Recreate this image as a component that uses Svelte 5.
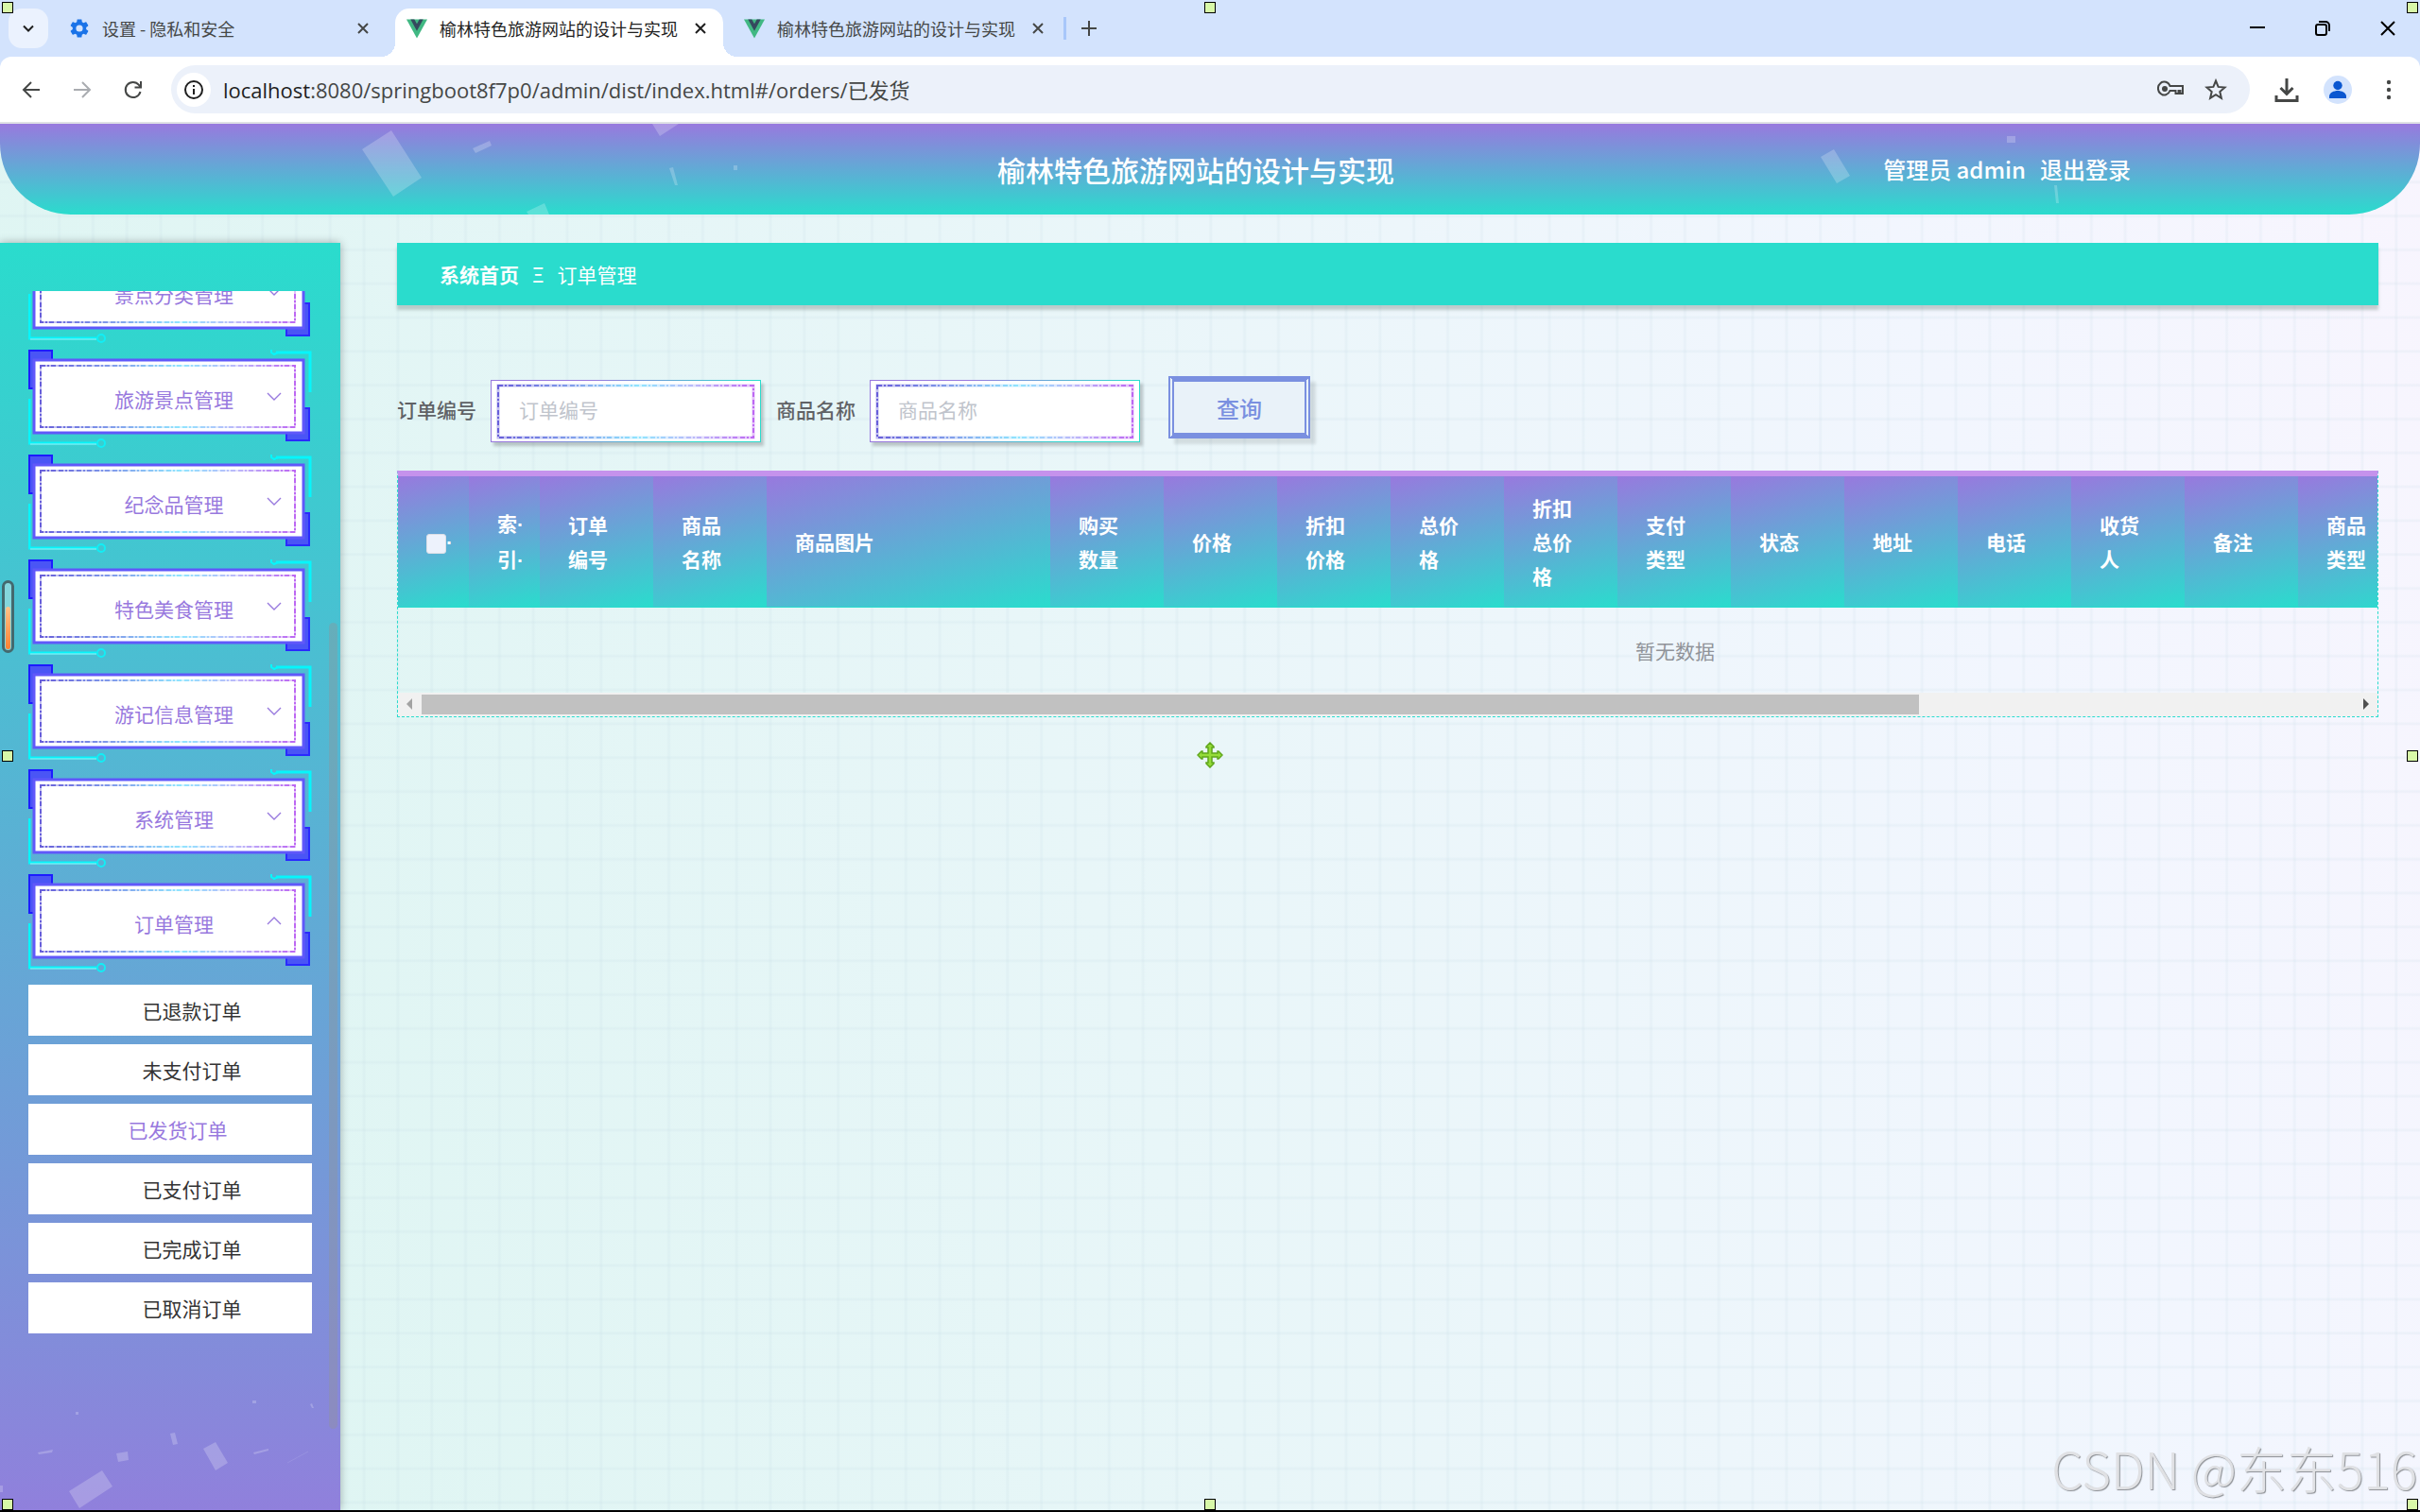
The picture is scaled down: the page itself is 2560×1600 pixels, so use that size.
<script lang="ts">
  interface Column {
    label: string
    width: number
    clipped?: boolean
  }

  const tabs = [
    { title: '设置 - 隐私和安全', icon: 'gear' },
    { title: '榆林特色旅游网站的设计与实现', icon: 'vue' },
    { title: '榆林特色旅游网站的设计与实现', icon: 'vue' },
  ]
  let activeTab = $state(1)

  const menus = ['景点分类管理', '旅游景点管理', '纪念品管理', '特色美食管理', '游记信息管理', '系统管理', '订单管理']
  let openMenu = $state('订单管理')

  const orderLinks = ['已退款订单', '未支付订单', '已发货订单', '已支付订单', '已完成订单', '已取消订单']
  let activeLink = $state('已发货订单')

  const columns: Column[] = [
    { label: '索引', width: 75, clipped: true },
    { label: '订单编号', width: 120 },
    { label: '商品名称', width: 120 },
    { label: '商品图片', width: 300 },
    { label: '购买数量', width: 120 },
    { label: '价格', width: 120 },
    { label: '折扣价格', width: 120 },
    { label: '总价格', width: 120 },
    { label: '折扣总价格', width: 120 },
    { label: '支付类型', width: 120 },
    { label: '状态', width: 120 },
    { label: '地址', width: 120 },
    { label: '电话', width: 120 },
    { label: '收货人', width: 120 },
    { label: '备注', width: 120 },
    { label: '商品类型', width: 120 },
  ]

  const handles = ['tl', 'tc', 'tr', 'ml', 'mr', 'bl', 'bc', 'br']

  let orderNo = $state('')
  let goodsName = $state('')
  let checkAll = $state(false)
</script>

{#snippet closeIcon()}
  <svg width="12" height="12" viewBox="0 0 12 12"><path d="M1 1l10 10M11 1L1 11" stroke="currentColor" stroke-width="2" fill="none" /></svg>
{/snippet}

{#snippet field(id: string, label: string)}
  <label for={id}>{label}</label>
  <div class="field">
    {#if id === 'order-no'}
      <input {id} type="text" placeholder={label} bind:value={orderNo} />
    {:else}
      <input {id} type="text" placeholder={label} bind:value={goodsName} />
    {/if}
    <svg class="field-frame" viewBox="0 0 286 66">
      <rect x="8" y="6" width="270" height="55" fill="none" stroke="url(#dash-gradient)" stroke-opacity="0.35" stroke-width="3" />
      <rect x="8" y="6" width="270" height="55" fill="none" stroke="url(#dash-gradient)" stroke-opacity="0.75" stroke-width="2" stroke-dasharray="5 2 2 2 5 3" />
    </svg>
  </div>
{/snippet}

<svg class="sprite" width="0" height="0" aria-hidden="true">
  <defs>
    <linearGradient id="dash-gradient">
      <stop offset="0" stop-color="#4a3fd2" />
      <stop offset="0.3" stop-color="#6a8ee8" />
      <stop offset="0.55" stop-color="#7be0ff" />
      <stop offset="0.78" stop-color="#b0a8f8" />
      <stop offset="1" stop-color="#b04af0" />
    </linearGradient>
  </defs>
  <symbol id="menu-frame" viewBox="0 0 300 104">
    <path d="M1 1h24v12H6v28H1z" fill="#4a55f5" stroke="#1c1cff" stroke-width="2" />
    <path d="M297 62v34h-24V84h18V62z" fill="#4a55f5" stroke="#2a2aff" stroke-width="2" />
    <rect x="6" y="11" width="285" height="77" fill="#fff" stroke="#6058fa" stroke-width="3" />
    <rect x="13" y="17" width="269" height="65" fill="none" stroke="url(#dash-gradient)" stroke-opacity="0.35" stroke-width="2" />
    <rect x="13" y="17" width="269" height="65" fill="none" stroke="url(#dash-gradient)" stroke-opacity="0.75" stroke-width="2" stroke-dasharray="5 2 2 2 5 3" />
    <path d="M262 3h36v42" fill="none" stroke="#06f6fb" stroke-width="3" />
    <path d="M257 0v3l3 2 4-2" fill="none" stroke="#06f6fb" stroke-width="2" />
    <path d="M1 52v47h71" fill="none" stroke="#06f6fb" stroke-width="3" />
    <path d="M2 100h70" fill="none" stroke="#a8e8ee" />
    <circle cx="77" cy="99" r="4" fill="none" stroke="#12eef5" stroke-width="2" />
  </symbol>
  <symbol id="vue" viewBox="0 0 23 21">
    <path d="M0 0h23L11.500 21z" fill="#41b883" />
    <path d="M4.500 0h4.200l2.800 5 2.800-5h4.200l-7 12.800z" fill="#35495e" />
  </symbol>
</svg>

<div class="window">
  <div class="tab-strip">
    <button class="tab-search" aria-label="搜索标签页">
      <svg width="14" height="14" viewBox="0 0 14 14"><path d="M2 4.500l5 5 5-5" fill="none" stroke="#1f1f1f" stroke-width="2" /></svg>
    </button>
    <div class="tabs">
      {#each tabs as tab, i}
        <div class="tab" class:active={activeTab === i}>
          <button class="tab-title" onclick={() => activeTab = i}>
            {#if tab.icon === 'gear'}
              <svg width="22" height="22" viewBox="1 1 22 22"><path fill="#1a73e8" d="M19.140 12.940c.04-.3.060-.61.060-.94 0-.32-.02-.64-.07-.94l2.030-1.580c.18-.14.23-.41.120-.61l-1.920-3.320c-.12-.22-.37-.29-.59-.22l-2.390.96c-.5-.38-1.030-.7-1.620-.94l-.36-2.540c-.04-.24-.24-.41-.48-.41h-3.840c-.24 0-.43.170-.47.410l-.36 2.540c-.59.240-1.130.570-1.620.940l-2.390-.96c-.22-.08-.47 0-.59.220L2.740 8.870c-.12.210-.08.470.120.610l2.030 1.580c-.05.3-.09.630-.09.940s.020.640.070.940l-2.030 1.580c-.18.140-.23.410-.12.610l1.920 3.320c.12.220.37.290.59.220l2.390-.96c.5.380 1.030.7 1.620.940l.36 2.540c.05.240.240.410.480.410h3.840c.24 0 .44-.17.470-.41l.36-2.540c.59-.24 1.130-.56 1.620-.94l2.390.96c.22.080.470 0 .59-.22l1.920-3.320c.12-.22.070-.47-.12-.61l-2.010-1.580zM12 15.600A3.600 3.600 0 1 1 12 8.400a3.600 3.600 0 0 1 0 7.200z" /></svg>
            {:else}
              <svg width="22" height="21"><use href="#vue" /></svg>
            {/if}
            <span>{tab.title}</span>
          </button>
          <button class="tab-close" aria-label="关闭">{@render closeIcon()}</button>
        </div>
      {/each}
    </div>
    <span class="separator"></span>
    <button class="new-tab" aria-label="打开新的标签页">
      <svg width="16" height="16" viewBox="0 0 16 16"><path d="M8 0v16M0 8h16" stroke="#454746" stroke-width="2" /></svg>
    </button>
    <div class="window-controls">
      <button aria-label="最小化"><svg width="16" height="16" viewBox="0 0 16 16"><path d="M0 7h16" stroke="#000" stroke-width="2" /></svg></button>
      <button aria-label="还原"><svg width="16" height="16" viewBox="0 0 16 16" fill="none" stroke="#000" stroke-width="2"><rect x="1" y="4" width="11" height="11" rx="2" /><path d="M4 1h7a4 4 0 0 1 4 4v6" /></svg></button>
      <button aria-label="关闭窗口"><svg width="16" height="16" viewBox="0 0 16 16"><path d="M1 1l14 14M15 1L1 15" stroke="#000" stroke-width="2" /></svg></button>
    </div>
  </div>

  <div class="toolbar">
    <button class="nav-btn" aria-label="后退"><svg width="20" height="20" viewBox="0 0 20 20" fill="none" stroke="#454746" stroke-width="2"><path d="M19 10H3M10 2l-8 8 8 8" /></svg></button>
    <button class="nav-btn" aria-label="前进"><svg width="20" height="20" viewBox="0 0 20 20" fill="none" stroke="#a9acb0" stroke-width="2"><path d="M1 10h16M10 2l8 8-8 8" /></svg></button>
    <button class="nav-btn" aria-label="重新加载"><svg width="20" height="20" viewBox="0 0 20 20" fill="none" stroke="#454746" stroke-width="2"><path d="M17.500 12A8 8 0 1 1 16 5l2 2M18 1v6.500h-6.500" /></svg></button>
    <div class="address">
      <span class="site-info">
        <svg width="20" height="20" viewBox="0 0 20 20" fill="none" stroke="#1f1f1f" stroke-width="2"><circle cx="10" cy="10" r="9" /><path d="M10 9v6M10 5v2" /></svg>
      </span>
      <span class="url"><b>localhost</b>:8080/springboot8f7p0/admin/dist/index.html#/orders/已发货</span>
      <button aria-label="管理密码"><svg width="28" height="22" viewBox="0 0 28 22" fill="none" stroke="#454746" stroke-width="2"><path d="M13.500 7H27v8h-2.500v-3h-2v3h-3v-3h-6a6.500 7 0 1 1 0-5z" /><circle cx="8" cy="10" r="3" fill="#454746" stroke="none" /></svg></button>
      <button aria-label="为此标签页添加书签"><svg width="24" height="24" viewBox="0 0 24 24" fill="none" stroke="#454746" stroke-width="2"><path d="M12 2.500l2.600 6.400 6.900.6-5.200 4.500 1.600 6.800L12 17.200l-5.900 3.600 1.600-6.800-5.200-4.500 6.900-.6z" /></svg></button>
    </div>
    <div class="toolbar-actions">
      <button aria-label="下载内容"><svg width="26" height="26" viewBox="0 0 26 26" fill="none" stroke="#454746" stroke-width="3"><path d="M13 1v16M6.500 11l6.500 6.500 6.500-6.500M2 19v5.500h22V19" /></svg></button>
      <button aria-label="个人资料"><svg width="30" height="30" viewBox="0 0 30 30"><circle cx="15" cy="15" r="15" fill="#d3e3fd" /><circle cx="15" cy="10.500" r="4.700" fill="#0b57d0" /><path d="M6 24v-2c0-4 5-6 9-6s9 2 9 6v2z" fill="#0b57d0" /></svg></button>
      <button aria-label="菜单"><svg width="6" height="22" viewBox="0 0 6 22" fill="#454746"><circle cx="3" cy="3" r="2.200" /><circle cx="3" cy="11" r="2.200" /><circle cx="3" cy="19" r="2.200" /></svg></button>
    </div>
  </div>

  <div class="page">
    <header class="page-header">
      <svg class="confetti" width="100%" height="96" fill="#fff" fill-opacity="0.22">
        <path d="M414 7l-31 20 33 50 30-20zM500 26l18-8 2 5-17 8zM690 0h28l-20 13zM708 47l4-1 5 19h-3zM557 93l19-9 5 12h-22zM776 44h4v5h-4z" />
        <path d="M1926 35l14-8 17 28-14 8zM2123 13h9v7h-9zM2173 65h3l2 19h-3z" />
      </svg>
      <h1>榆林特色旅游网站的设计与实现</h1>
      <div class="user">
        <span>管理员 admin</span>
        <a href="#/login">退出登录</a>
      </div>
    </header>

    <div class="layout">
      <aside class="sidebar">
        <nav class="menu">
          {#each menus as menu}
            <button class="menu-item" onclick={() => openMenu = menu}>
              <svg class="menu-frame" width="300" height="104"><use href="#menu-frame" /></svg>
              <span>{menu}</span>
              <svg class="chevron" class:open={openMenu === menu} width="16" height="9" viewBox="0 0 16 9"><path d="M1 1l7 7 7-7" fill="none" stroke="#9879de" stroke-width="1.400" /></svg>
            </button>
          {/each}
          <div class="submenu">
            {#each orderLinks as link}
              <a href="#/orders" class:active={activeLink === link} onclick={() => activeLink = link}>{link}</a>
            {/each}
          </div>
        </nav>
        <div class="menu-scroll"></div>
        <svg class="sidebar-confetti" width="360" height="150" viewBox="0 0 360 150" fill="#fff" fill-opacity="0.22">
          <path d="M80 46h3v3h-3zM267 34h4v3h-4zM328 38l2-1 2 5h-2zM180 69l5-1 3 12-5 1zM40 89l16-3-1 3-14 2zM123 90l12-2 1 9-11 2zM215 85l13-7 13 22-13 8zM268 89l16-4v2l-15 4zM73 130l35-22 11 17-35 23zM0 124h3v7H0z" />
          <path d="M304 100l22-12" stroke="#fff" stroke-opacity="0.1" />
        </svg>
      </aside>

      <main class="content">
        <div class="breadcrumb">
          <a href="#/">系统首页</a>
          <span class="mark">Ξ</span>
          <span>订单管理</span>
        </div>

        <form class="filters" onsubmit={e => e.preventDefault()}>
          {@render field('order-no', '订单编号')}
          {@render field('goods-name', '商品名称')}
          <button class="search">查询</button>
        </form>

        <div class="table-box">
          <div class="table-view">
            <table>
              <colgroup>
                <col style="width: 75px" />
                {#each columns as col}
                  <col style="width: {col.width}px" />
                {/each}
                <col />
              </colgroup>
              <thead>
                <tr>
                  <th class="check"><input type="checkbox" aria-label="全选" bind:checked={checkAll} /><i>·</i></th>
                  {#each columns as col}
                    <th class:clipped={col.clipped}>
                      {#if col.clipped}
                        {#each col.label as ch}<div>{ch}<i>·</i></div>{/each}
                      {:else}
                        {col.label}
                      {/if}
                    </th>
                  {/each}
                  <th></th>
                </tr>
              </thead>
              <tbody>
                <tr><td colspan={columns.length + 2}>暂无数据</td></tr>
              </tbody>
            </table>
          </div>
          <div class="scrollbar">
            <svg width="25" height="24" viewBox="0 0 25 24"><path d="M15 6v12l-6-6z" fill="#a3a3a3" /></svg>
            <div class="thumb"></div>
            <div class="rest"></div>
            <svg width="25" height="24" viewBox="0 0 25 24"><path d="M10 6v12l6-6z" fill="#505050" /></svg>
          </div>
        </div>
      </main>
    </div>
  </div>

  <div class="gauge"><div class="gauge-fill"></div></div>
  {#each handles as pos}
    <span class="handle {pos}"></span>
  {/each}
  <svg class="move" width="28" height="28" viewBox="0 0 28 28"><path d="M14 1l4 4v1h-2v6h6v-2h1l4 4-4 4h-1v-2h-6v6h2v1l-4 4-4-4v-1h2v-6H6v2H5l-4-4 4-4h1v2h6V6h-2V5z" fill="#94dc38" stroke="#5fa51c" stroke-width="1.500" /></svg>
  <div class="watermark">CSDN @东东516</div>
</div>

<style>
  :global(body) {
    margin: 0;
    overflow-x: hidden;
    font-family: "Noto Sans CJK SC", "Noto Sans", sans-serif;
  }

  button {
    display: flex;
    align-items: center;
    justify-content: center;
    padding: 0;
    border: 0;
    background: none;
    font-family: inherit;
    color: inherit;
  }
  a {
    color: inherit;
    text-decoration: none;
  }
  svg {
    display: block;
    flex-shrink: 0;
  }
  .sprite {
    position: absolute;
  }

  .window {
    position: relative;
    display: flex;
    flex-direction: column;
    box-sizing: border-box;
    min-height: 100vh;
    border-bottom: 2px solid #000;
    overflow: hidden;
    background: #d3e3fd;
  }

  /* browser chrome */
  .tab-strip {
    display: flex;
    align-items: center;
    height: 60px;
    padding-left: 9px;
  }
  .tab-search {
    width: 42px;
    height: 42px;
    margin-right: 10px;
    border-radius: 14px;
    background: #ebf2fe;
  }
  .tabs {
    display: flex;
    align-self: flex-end;
    gap: 10px;
  }
  .tab {
    position: relative;
    display: flex;
    align-items: center;
    box-sizing: border-box;
    width: 347px;
    height: 51px;
    padding: 0 18px 9px 12px;
    border-radius: 15px 15px 0 0;
    color: #454746;
  }
  .tab.active {
    background: #fff;
    color: #1f1f1f;
  }
  .tab.active::before, .tab.active::after {
    content: "";
    position: absolute;
    bottom: 0;
    width: 15px;
    height: 15px;
  }
  .tab.active::before {
    right: 100%;
    background: radial-gradient(circle at 0 0, transparent 15px, #fff 15px);
  }
  .tab.active::after {
    left: 100%;
    background: radial-gradient(circle at 100% 0, transparent 15px, #fff 15px);
  }
  .tab-title {
    flex: 1;
    justify-content: flex-start;
    gap: 13px;
    font-size: 18px;
    line-height: 24px;
    white-space: nowrap;
  }
  .tab-close {
    width: 12px;
    height: 12px;
  }
  .separator {
    width: 3px;
    height: 24px;
    margin: 0 16px 0 3px;
    background: #a8c7fa;
  }
  .window-controls {
    display: flex;
    margin-left: auto;
  }
  .window-controls button {
    width: 69px;
    height: 60px;
  }

  .toolbar {
    display: flex;
    align-items: center;
    height: 69px;
    padding-left: 6px;
    border-bottom: 2px solid #dfe1e5;
    border-radius: 12px 12px 0 0;
    background: #fff;
  }
  .nav-btn {
    width: 54px;
    height: 48px;
  }
  .address {
    display: flex;
    flex: 1;
    align-items: center;
    gap: 22px;
    box-sizing: border-box;
    height: 51px;
    margin-left: 13px;
    padding: 0 24px 0 6px;
    border-radius: 26px;
    background: #ecf1fa;
  }
  .site-info {
    display: flex;
    align-items: center;
    justify-content: center;
    width: 36px;
    height: 36px;
    margin-right: -9px;
    border-radius: 50%;
    background: #fff;
  }
  .url {
    flex: 1;
    font-family: "Open Sans", "Noto Sans CJK SC", sans-serif;
    font-size: 22px;
    line-height: 30px;
    color: #454746;
  }
  .url b {
    font-weight: 400;
    color: #1f1f1f;
  }
  .toolbar-actions {
    display: flex;
  }
  .toolbar-actions button {
    width: 54px;
    height: 48px;
  }
  .toolbar-actions button:first-child {
    margin-left: 12px;
  }
  .toolbar-actions button:last-child {
    margin-right: 6px;
  }

  /* page */
  .page {
    display: flex;
    flex: 1;
    flex-direction: column;
    gap: 30px;
    background:
      linear-gradient(90deg, transparent 88%, rgba(190, 215, 225, 0.15) 92% 96%, transparent) 29px 0 / 1.4vw 1.4vw,
      linear-gradient(180deg, transparent 88%, rgba(190, 215, 225, 0.15) 92% 96%, transparent) 0 28px / 1.4vw 1.4vw,
      linear-gradient(75deg, #dcf5f1, #e8f6f8 45%, #f2f6fe 80%, #f8f5fe);
  }
  .page-header {
    position: relative;
    display: grid;
    grid-template-columns: 1fr auto 1fr;
    align-items: center;
    height: 96px;
    overflow: hidden;
    border-radius: 0 0 75px 75px;
    background: linear-gradient(180deg, #9879de, #2adccd);
    color: #fff;
  }
  .confetti {
    position: absolute;
    inset: 0;
  }
  h1 {
    grid-column: 2;
    margin: 0 0 0 -30px;
    font-size: 30px;
    font-weight: 500;
  }
  .user {
    display: flex;
    gap: 15px;
    justify-content: flex-end;
    padding-right: 306px;
    font-size: 24px;
    font-weight: 500;
    line-height: 36px;
  }

  .layout {
    display: flex;
    flex: 1;
    gap: 60px;
    padding-right: 44px;
  }

  .sidebar {
    position: relative;
    flex-shrink: 0;
    box-sizing: border-box;
    width: 360px;
    padding: 51px 30px 0;
    background: linear-gradient(180deg, #2adccd, #9080dc);
    box-shadow: 0 0 9px rgba(0, 0, 0, 0.3);
    font-size: 21px;
  }
  .menu {
    display: flex;
    flex-direction: column;
    gap: 7px;
    overflow: hidden;
  }
  .menu-item {
    position: relative;
    flex-shrink: 0;
    box-sizing: border-box;
    height: 104px;
    padding: 0 0 0 8px;
    font-size: 21px;
    color: #9879de;
  }
  .menu-item:first-child {
    margin-top: -49px;
  }
  .menu-frame {
    position: absolute;
    inset: 0;
  }
  .menu-item span {
    position: relative;
  }
  .chevron {
    position: absolute;
    top: 45px;
    right: 32px;
  }
  .chevron.open {
    transform: rotate(180deg);
  }
  .submenu {
    display: flex;
    flex-direction: column;
    gap: 9px;
    margin-top: 6px;
  }
  .submenu a {
    padding-left: 46px;
    background: #fff;
    color: #333;
    line-height: 54px;
    text-align: center;
  }
  .submenu a.active {
    padding-left: 16px;
    color: #9879de;
  }
  .menu-scroll {
    position: absolute;
    top: 402px;
    right: 3px;
    bottom: 86px;
    width: 9px;
    border-radius: 5px;
    background: rgba(144, 147, 153, 0.4);
  }
  .sidebar-confetti {
    position: absolute;
    bottom: 0;
    left: 0;
  }

  .content {
    flex: 1;
    min-width: 0;
  }
  .breadcrumb {
    display: flex;
    align-items: center;
    gap: 14px;
    height: 66px;
    padding-left: 45px;
    background: #2adccd;
    box-shadow: 0 5px 3px rgba(120, 140, 135, 0.4);
    font-size: 21px;
    color: #fff;
  }
  .breadcrumb a {
    font-weight: 700;
  }

  .filters {
    display: flex;
    align-items: flex-start;
    margin: 75px 0 30px;
    font-size: 21px;
  }
  .filters label {
    margin-top: 4px;
    font-weight: 500;
    line-height: 62px;
    color: #606266;
  }
  .field {
    position: relative;
    box-sizing: border-box;
    width: 286px;
    height: 66px;
    margin: 4px 16px 0 15px;
    padding: 1px;
    background: linear-gradient(135deg, #9879de 30%, #2adccd 80%);
    box-shadow: 3px 4px 3px rgba(0, 0, 0, 0.2);
  }
  .field input {
    box-sizing: border-box;
    width: 100%;
    height: 64px;
    padding: 0 30px 4px 29px;
    border: 0;
    outline: 0;
    background: #fff;
    font-family: inherit;
    font-size: 21px;
    color: #606266;
  }
  .field input::placeholder {
    color: #c0c4cc;
  }
  .field-frame {
    position: absolute;
    inset: 0;
    pointer-events: none;
  }
  .search {
    box-sizing: border-box;
    width: 150px;
    height: 66px;
    margin-left: 14px;
    border: 6px #7a90e0;
    border-style: solid double;
    background: #e9f2f9;
    box-shadow: 6px 6px 3px rgba(0, 0, 0, 0.1);
    font-size: 24px;
    font-weight: 500;
    color: #7a90e0;
  }

  .table-box {
    border: 1px dashed #2adccd;
    border-top: 6px solid #c592ec;
  }
  .table-view {
    overflow: hidden;
  }
  table {
    width: 2702px;
    table-layout: fixed;
    border-collapse: collapse;
    font-size: 21px;
    line-height: 36px;
  }
  th {
    box-sizing: border-box;
    height: 138px;
    padding: 0 30px;
    border-bottom: 1px solid #2adccd;
    background: linear-gradient(165deg, #9879de, #2adccd);
    color: #fff;
    font-weight: 700;
    text-align: left;
  }
  th.check, th.clipped {
    padding-right: 0;
    white-space: nowrap;
  }
  th i {
    font-family: "Liberation Sans", sans-serif;
    font-style: normal;
  }
  .check input {
    appearance: none;
    width: 21px;
    height: 21px;
    margin: 0;
    border: 1px solid #dcdfe6;
    border-radius: 3px;
    background: #edf2fc;
    vertical-align: middle;
  }
  td {
    height: 90px;
    padding: 0;
    color: #909399;
    text-align: center;
  }
  .scrollbar {
    display: flex;
    height: 25px;
    background: #f1f1f1;
  }
  .thumb {
    flex: 31;
    height: 21px;
    margin-top: 2px;
    background: #c1c1c1;
  }
  .rest {
    flex: 9;
  }

  /* overlay marks */
  .gauge {
    position: absolute;
    top: 614px;
    left: 2px;
    display: flex;
    align-items: flex-end;
    box-sizing: border-box;
    width: 13px;
    height: 77px;
    padding: 1px;
    border: 3px solid #44696e;
    border-radius: 7px;
    background: #84d6dc;
  }
  .gauge-fill {
    width: 100%;
    height: 65%;
    border-radius: 3px;
    background: linear-gradient(180deg, #ffc38a, #ff8132);
  }
  .handle {
    position: absolute;
    box-sizing: border-box;
    width: 12px;
    height: 12px;
    border: 1px solid #000;
    background: #d8f8a8;
  }
  .tl, .tc, .tr {
    top: 2px;
  }
  .ml, .mr {
    top: calc(50% - 5px);
  }
  .bl, .bc, .br {
    bottom: 0;
  }
  .tl, .ml, .bl {
    left: 2px;
  }
  .tc, .bc {
    left: calc(50% - 6px);
  }
  .tr, .mr, .br {
    right: 2px;
  }
  .move {
    position: absolute;
    top: calc(50% - 14px);
    left: calc(50% - 14px);
  }
  .watermark {
    position: absolute;
    right: 3px;
    bottom: 6px;
    color: #e0e1e4;
    font-size: 53px;
    font-weight: 300;
    line-height: 78px;
    text-shadow: 1px 1px 1px #8c8f94;
  }
</style>
